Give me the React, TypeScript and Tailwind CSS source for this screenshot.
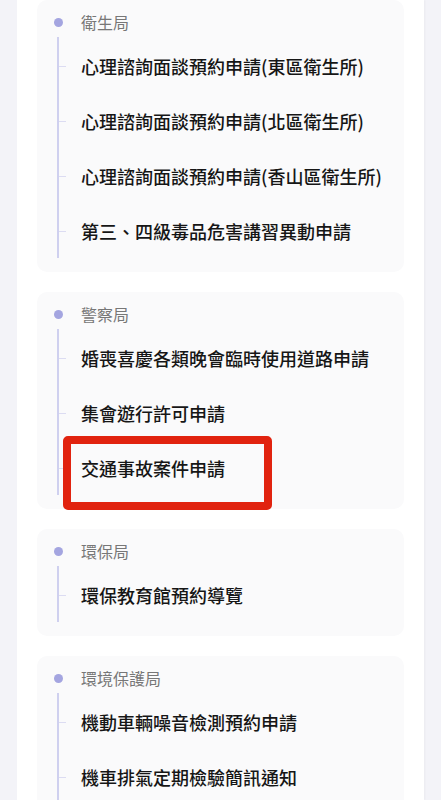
import React from "react";

type Group = { title: string; items: string[]; highlight?: number };

const groups: Group[] = [
  {
    title: "衛生局",
    items: [
      "心理諮詢面談預約申請(東區衛生所)",
      "心理諮詢面談預約申請(北區衛生所)",
      "心理諮詢面談預約申請(香山區衛生所)",
      "第三、四級毒品危害講習異動申請",
    ],
  },
  {
    title: "警察局",
    items: ["婚喪喜慶各類晚會臨時使用道路申請", "集會遊行許可申請", "交通事故案件申請"],
    highlight: 2,
  },
  { title: "環保局", items: ["環保教育館預約導覽"] },
  {
    title: "環境保護局",
    items: ["機動車輛噪音檢測預約申請", "機車排氣定期檢驗簡訊通知"],
  },
];

export default function App() {
  return (
    <div
      className="min-h-[800px] h-[800px] overflow-hidden bg-[#f3f3f8] px-[17px]"
      style={{ fontFamily: '"Noto Sans CJK TC", "Noto Sans", sans-serif' }}
    >
      <div className="h-full bg-white px-[20px] shadow-[1px_0_2px_rgba(0,0,0,0.04)]">
        <div className="flex flex-col gap-[20px]">
          {groups.map((g) => (
            <div key={g.title} className="rounded-[10px] bg-[#fafafb] pt-[12px] pb-[14px]">
              <div className="flex h-[20px] items-center">
                <span className="ml-[17px] h-[9px] w-[9px] rounded-full bg-[#a4a5e0]" />
                <span className="ml-[18px] text-[16px] leading-[20px] text-[#777777]">{g.title}</span>
              </div>
              <div className="ml-[20px] mt-[5px] border-l-2 border-[#cfd0ef] pt-[1px]">
                {g.items.map((it, i) => (
                  <div key={it} className="relative flex h-[55px] items-center pl-[22px]">
                    <span className="absolute left-0 top-1/2 h-px w-[7px] bg-[#dcdcf2]" />
                    <span className="text-[18px] font-medium leading-[24px] text-[#161616]">{it}</span>
                    {g.highlight === i && (
                      <span className="absolute left-[4px] top-[-4px] h-[74px] w-[209px] rounded-[5px] border-[8px] border-[#e1230f]" />
                    )}
                  </div>
                ))}
              </div>
            </div>
          ))}
        </div>
      </div>
    </div>
  );
}
